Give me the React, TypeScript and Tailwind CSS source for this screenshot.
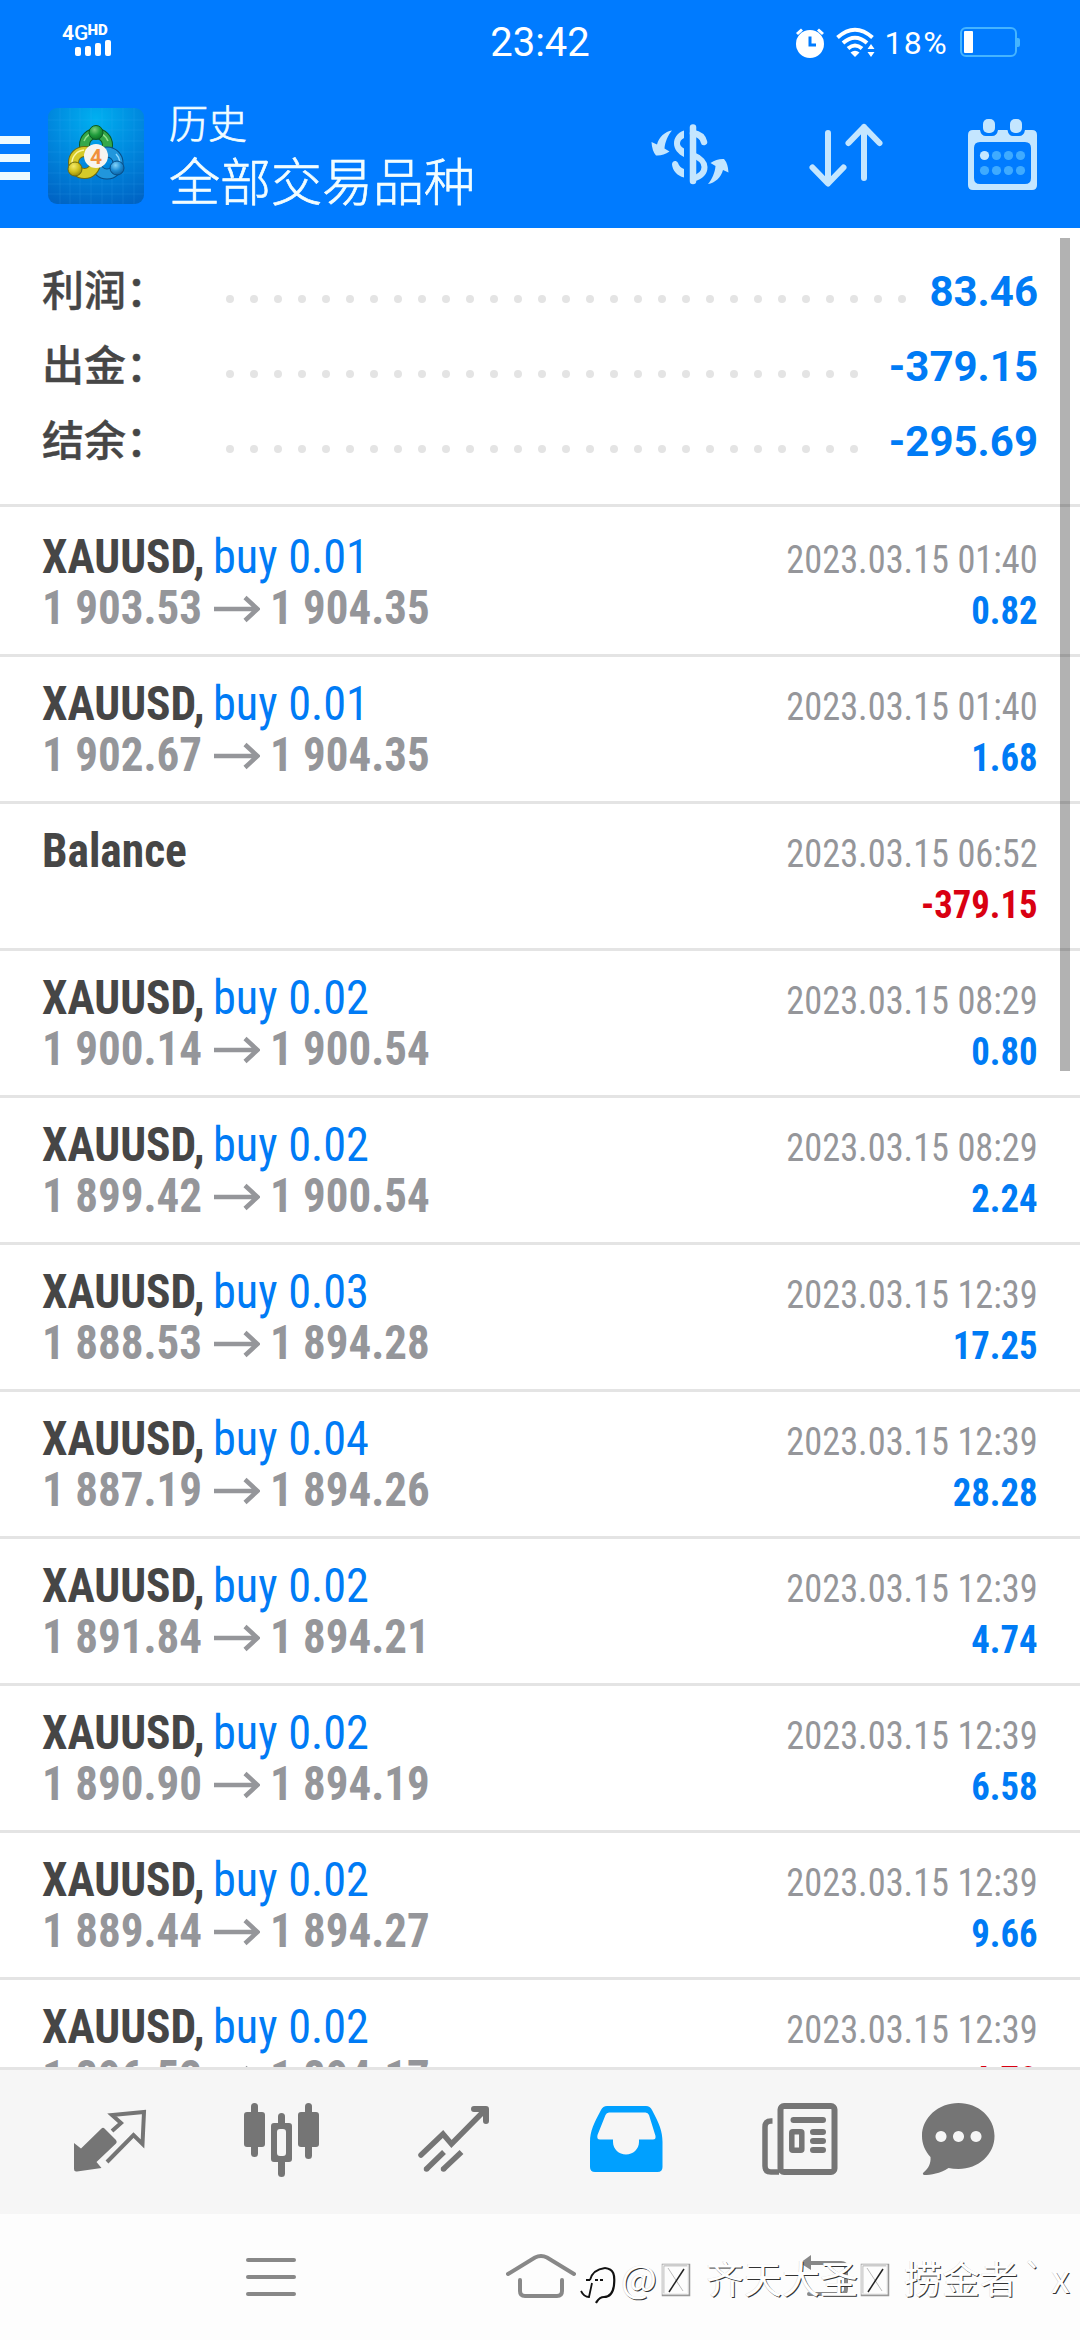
import React from 'react';

const summary = [
  { label: '利润：', value: '83.46', dots: 29 },
  { label: '出金：', value: '-379.15', dots: 27 },
  { label: '结余：', value: '-295.69', dots: 27 },
];

interface Deal {
  symbol: string;
  volume?: string;
  open?: string;
  close?: string;
  time: string;
  profit: string;
  loss?: boolean;
}

const deals: Deal[] = [
  { symbol: 'XAUUSD,', volume: 'buy 0.01', open: '1 903.53', close: '1 904.35', time: '2023.03.15 01:40', profit: '0.82' },
  { symbol: 'XAUUSD,', volume: 'buy 0.01', open: '1 902.67', close: '1 904.35', time: '2023.03.15 01:40', profit: '1.68' },
  { symbol: 'Balance', time: '2023.03.15 06:52', profit: '-379.15', loss: true },
  { symbol: 'XAUUSD,', volume: 'buy 0.02', open: '1 900.14', close: '1 900.54', time: '2023.03.15 08:29', profit: '0.80' },
  { symbol: 'XAUUSD,', volume: 'buy 0.02', open: '1 899.42', close: '1 900.54', time: '2023.03.15 08:29', profit: '2.24' },
  { symbol: 'XAUUSD,', volume: 'buy 0.03', open: '1 888.53', close: '1 894.28', time: '2023.03.15 12:39', profit: '17.25' },
  { symbol: 'XAUUSD,', volume: 'buy 0.04', open: '1 887.19', close: '1 894.26', time: '2023.03.15 12:39', profit: '28.28' },
  { symbol: 'XAUUSD,', volume: 'buy 0.02', open: '1 891.84', close: '1 894.21', time: '2023.03.15 12:39', profit: '4.74' },
  { symbol: 'XAUUSD,', volume: 'buy 0.02', open: '1 890.90', close: '1 894.19', time: '2023.03.15 12:39', profit: '6.58' },
  { symbol: 'XAUUSD,', volume: 'buy 0.02', open: '1 889.44', close: '1 894.27', time: '2023.03.15 12:39', profit: '9.66' },
  { symbol: 'XAUUSD,', volume: 'buy 0.02', open: '1 896.52', close: '1 894.17', time: '2023.03.15 12:39', profit: '-4.70', loss: true },
];

const StatusBar: React.FC = () => (
  <div className="grid h-[86px] grid-cols-3 text-white">
    <div className="pt-[24px] pl-[62px]">
      <div className="flex h-[16px] items-start font-['Roboto'] leading-none font-bold">
        <span className="text-[21px] leading-[19px]">4</span>
        <span className="text-[21px] leading-[19px] font-medium tracking-[-1px]">G</span>
        <span className="text-[15px] leading-[13px] font-black">HD</span>
      </div>
      <div className="flex h-[16px] items-end gap-[4px] pl-[13px]">
        <span className="h-[9px] w-[6px] rounded-[2px] bg-white"></span>
        <span className="h-[10px] w-[6px] rounded-[2px] bg-white"></span>
        <span className="h-[13px] w-[6px] rounded-[2px] bg-white"></span>
        <span className="h-[16px] w-[6px] rounded-[2px] bg-white"></span>
      </div>
    </div>
    <div className="pt-[20px] text-center font-['Roboto'] text-[40px] leading-[46px]">23:42</div>
    <div className="flex items-start justify-end pr-[60px]">
      <svg className="mt-[27px] h-[31px] w-[30px]" viewBox="0 0 30 31" fill="none">
        <circle cx="15" cy="17" r="14" fill="#fff" />
        <path d="M2 7 L7 2.500 M28 7 L23 2.500" stroke="#fff" strokeWidth="3" />
        <path d="M15 9.500 V18 H21" stroke="#007bff" strokeWidth="3" />
      </svg>
      <svg className="mt-[27px] ml-[11px] h-[31px] w-[40px]" viewBox="0 0 40 31" fill="none" stroke="#fff">
        <path d="M1.500 10.500 Q19 -5 36.500 10.500" strokeWidth="4" />
        <path d="M7 16 Q19 5.500 31 16" strokeWidth="4" />
        <path d="M12 21.500 Q19 15.500 26 21.500" strokeWidth="4" />
        <path d="M19 30 L14.500 25.500 Q19 22 23.500 25.500Z" fill="#fff" stroke="none" />
        <path d="M35 17 L38.500 22 H31.500Z M35 30 L38.500 25 H31.500Z" fill="#fff" stroke="none" />
      </svg>
      <span className="mt-[25px] ml-[8px] font-['Roboto'] text-[32px] leading-[37px] tracking-[1.4px]">18%</span>
      <div className="mt-[27px] ml-[12px] flex items-center">
        <div className="h-[30px] w-[57px] rounded-[6px] border-2 border-[#45b4ff] p-[2px]">
          <div className="h-full w-[9px] rounded-[1px] bg-white"></div>
        </div>
        <div className="h-[9px] w-[3px] rounded-r-[2px] bg-[#45b4ff]"></div>
      </div>
    </div>
  </div>
);

const AppLogo: React.FC = () => (
  <svg className="mt-[22px] ml-[18px] h-24 w-24" viewBox="0 0 96 96" fill="none">
    <defs>
      <radialGradient id="sky" cx="0.5" cy="0.12" r="0.95">
        <stop offset="0" stopColor="#00b0f0" />
        <stop offset="0.5" stopColor="#0088de" />
        <stop offset="1" stopColor="#0064c4" />
      </radialGradient>
      <radialGradient id="green" cx="0.4" cy="0.3" r="0.8">
        <stop offset="0" stopColor="#7ed07c" />
        <stop offset="0.5" stopColor="#1f9c3c" />
        <stop offset="1" stopColor="#0a6420" />
      </radialGradient>
      <radialGradient id="yellow" cx="0.4" cy="0.3" r="0.8">
        <stop offset="0" stopColor="#f4ea6a" />
        <stop offset="0.5" stopColor="#cfc01c" />
        <stop offset="1" stopColor="#857a08" />
      </radialGradient>
      <radialGradient id="blue" cx="0.4" cy="0.3" r="0.8">
        <stop offset="0" stopColor="#86d4fa" />
        <stop offset="0.5" stopColor="#1c8cd4" />
        <stop offset="1" stopColor="#0a5494" />
      </radialGradient>
    </defs>
    <rect width="96" height="96" rx="9" fill="url(#sky)" />
    <path
      d="M12 0V96M22 0V96M32 0V96M43 0V96M54 0V96M64 0V96M75 0V96M86 0V96M0 12H96M0 22H96M0 33H96M0 44H96M0 54H96M0 65H96M0 76H96M0 86H96"
      stroke="#4cc0ff"
      strokeOpacity="0.14"
    />
    <circle cx="48" cy="37" r="11.500" stroke="#0b5a22" strokeWidth="11" />
    <circle cx="48" cy="37" r="11.500" stroke="#35a84a" strokeWidth="9" />
    <path d="M36 33 A13 13 0 0 1 60 33" stroke="#8fe08c" strokeWidth="1.500" />
    <circle cx="59" cy="55" r="11" stroke="#084d86" strokeWidth="11" />
    <circle cx="59" cy="55" r="11" stroke="#2196dc" strokeWidth="9" />
    <path d="M68 46 A13 13 0 0 1 70 62" stroke="#8ad6ff" strokeWidth="1.500" />
    <circle cx="36.500" cy="54.500" r="11" stroke="#6f6a0c" strokeWidth="11" />
    <circle cx="36.500" cy="54.500" r="11" stroke="#d6ca28" strokeWidth="9" />
    <path d="M24 55 A13 13 0 0 1 36 42" stroke="#fbf6a0" strokeWidth="1.500" />
    <circle cx="48" cy="24.500" r="7" fill="url(#green)" stroke="#0b5a22" />
    <circle cx="27" cy="61" r="7" fill="url(#yellow)" stroke="#6f6a0c" />
    <circle cx="69" cy="60" r="7" fill="url(#blue)" stroke="#084d86" />
    <circle cx="48" cy="48" r="12" fill="#f6f4f0" />
    <text x="48" y="55.500" textAnchor="middle" fill="#f0913c" className="font-['Roboto'] text-[21px] font-bold">4</text>
  </svg>
);

const Header: React.FC = () => (
  <header className="h-[228px] bg-[#007bff]">
    <StatusBar />
    <div className="flex h-[142px] items-start">
      <div className="mt-[50px] flex w-[30px] flex-col gap-[10px]">
        <span className="h-[8px] bg-[#ecfaff]"></span>
        <span className="h-[8px] bg-[#ecfaff]"></span>
        <span className="h-[8px] bg-[#ecfaff]"></span>
      </div>
      <AppLogo />
      <div className="ml-[25px] flex-1 pt-[7px] font-['Noto_Sans_CJK_SC',sans-serif] font-light text-[#f2fdff]">
        <div className="text-[39px] leading-[56px] [-webkit-text-stroke:0.7px_#f2fdff]">历史</div>
        <div className="text-[51px] leading-[61px] [-webkit-text-stroke:0.7px_#f2fdff]">全部交易品种</div>
      </div>
      <svg className="mt-[36px] h-[64px] w-[80px]" viewBox="0 0 80 64" fill="none" stroke="#c4e6ff">
        <path d="M43 5.500 V59" strokeWidth="6.500" strokeLinecap="round" />
        <path d="M34 8.500 C27 11 24 16 24 21.500 C24 27 28 32 34 35 V26.500 C31 25 30 23 30 21.500 C30 19.500 31 17.500 34 16Z" fill="#c4e6ff" stroke="none" />
        <path d="M43 11 C49 12 53 15.500 54 20" strokeWidth="6.500" strokeLinecap="round" />
        <path d="M43 33 C51 36 54.500 41 54.500 45 C54.500 50 51 54.500 43 56.500" strokeWidth="6" />
        <path d="M22 42.500 C22 39 26 37.500 28 41 C29 44 31 46 34 47 V55.500 C27 54 22.500 48 22 42.500Z" fill="#c4e6ff" stroke="none" />
        <path d="M22 8.500 C15 9.500 9 15 7 22.500 L1.500 20 Q2 29 6 33.500 Q13 34 19.500 29.500 L14.500 26.500 C15 20 18 13 22 8.500Z" fill="#c4e6ff" stroke="none" />
        <path d="M58 62 C65 61 71 55.500 73 48 L78.500 50.500 Q78 41.500 74 37 Q67 36.500 60.500 41 L65.500 44 C65 50.500 62 57.500 58 62Z" fill="#c4e6ff" stroke="none" />
      </svg>
      <svg className="mt-[36px] ml-[78px] h-[68px] w-[76px]" viewBox="0 0 76 68" fill="none" stroke="#c4e6ff" strokeWidth="6" strokeLinecap="round" strokeLinejoin="round">
        <path d="M20 11 V61 M4.500 45.500 L20 61.500 L35.500 45.500" />
        <path d="M56 56 V5 M40.500 21 L56 5 L71.500 21" />
      </svg>
      <svg className="mt-[32px] mr-[43px] ml-[84px] h-[73px] w-[69px]" viewBox="0 0 69 73">
        <path
          fill="#c4e6ff"
          fillRule="evenodd"
          d="M5 12 H12 Q13 18 18 18 H24 Q29 18 30 12 H39.500 Q40.500 18 45 18 H51 Q56 18 57 12 H64 Q69 12 69 17 V67 Q69 72 64 72 H5 Q0 72 0 67 V17 Q0 12 5 12Z M12 24 Q6 24 6 30 V60 Q6 66 12 66 H57 Q63 66 63 60 V30 Q63 24 57 24Z"
        />
        <rect x="15" y="1" width="12" height="14" rx="5" fill="#c4e6ff" />
        <rect x="42" y="1" width="12" height="14" rx="5" fill="#c4e6ff" />
        <circle cx="16.500" cy="37.500" r="4.600" fill="#c4e6ff" />
        <circle cx="28.500" cy="37.500" r="4.600" fill="#3fabff" />
        <circle cx="40.500" cy="37.500" r="4.600" fill="#3fabff" />
        <circle cx="52.500" cy="37.500" r="4.600" fill="#3fabff" />
        <circle cx="16.500" cy="52.500" r="4.600" fill="#3fabff" />
        <circle cx="28.500" cy="52.500" r="4.600" fill="#3fabff" />
        <circle cx="40.500" cy="52.500" r="4.600" fill="#3fabff" />
        <circle cx="52.500" cy="52.500" r="4.600" fill="#3fabff" />
      </svg>
    </div>
  </header>
);

const Summary: React.FC = () => (
  <section className="mb-[3px] flex h-[279px] flex-col border-b-[3px] border-[#e4e4e4] pt-[24px] pr-[42px] pl-[42px]">
    {summary.map((item) => (
      <div key={item.label} className="flex h-[75px] items-start">
        <span className="-mt-[2px] w-[184px] font-['Noto_Sans_CJK_SC',sans-serif] text-[42px] leading-[75px] font-medium text-[#464646] [-webkit-text-stroke:0.4px_#464646]">
          {item.label}
        </span>
        <div className="mt-[43px] flex gap-[16px]">
          {Array.from({ length: item.dots }, (_, i) => (
            <span key={i} className="size-2 rounded-full bg-[#e4e4e4]"></span>
          ))}
        </div>
        <span className="mt-[2px] ml-auto font-['Roboto'] text-[42px] leading-[75px] font-bold text-[#007bf5]">{item.value}</span>
      </div>
    ))}
  </section>
);

const DealRow: React.FC<{ deal: Deal }> = ({ deal }) => (
  <li className="flex h-[147px] justify-between border-b-[3px] border-[#e4e4e4] pr-[42px] pl-[42px] font-['Roboto_Condensed']">
    <div className="pt-[21px] text-[48px] leading-[51px] whitespace-nowrap">
      <div className="flex">
        <span className="w-[171px] origin-left scale-x-[0.947] font-bold text-[#464646]">{deal.symbol}</span>
        {deal.volume && <span className="origin-left scale-x-[0.965] text-[#007bf5]">{deal.volume}</span>}
      </div>
      {deal.open && (
        <div className="flex items-center font-bold text-[#95969a]">
          <span className="w-[172px] origin-left scale-x-[0.938]">{deal.open}</span>
          <svg className="mt-[2px] h-[28px] w-[46px]" viewBox="0 0 46 28" fill="none" stroke="#95969a" strokeWidth="4.500">
            <path d="M0 14 H43 M31 2.500 L43.500 14 L31 25.500" />
          </svg>
          <span className="ml-[10px] origin-left scale-x-[0.936]">{deal.close}</span>
        </div>
      )}
    </div>
    <div className="pt-[25px] text-right text-[39px] leading-[51px] whitespace-nowrap">
      <div className="origin-right scale-x-[0.932] text-[#95969a]">{deal.time}</div>
      <div className={deal.loss ? 'origin-right scale-x-[0.942] font-bold text-[#d90012]' : 'origin-right scale-x-[0.942] font-bold text-[#007bf5]'}>
        {deal.profit}
      </div>
    </div>
  </li>
);

const TabBar: React.FC = () => (
  <nav className="flex h-[147px] items-start border-t-[3px] border-[#e4e4e4] bg-[#f6f6f6] text-[#757575]">
    <svg className="mt-[38px] ml-[74px] h-[65px] w-[73px]" viewBox="0 0 73 65" fill="none">
      <path d="M38 23 L47 15 L38 7 L70 4 L68.500 36 L59.500 27 L33 54" stroke="currentColor" strokeWidth="4" />
      <path d="M0 35 L7 40.500 L27.500 20.500 Q29 19 30.500 20.500 L42 32 Q43.500 34 42 35.500 L22.500 54 L27.500 60 L3 63.500 Q0 64 0 61Z" fill="currentColor" />
    </svg>
    <svg className="mt-[33px] ml-[97px] h-[74px] w-[75px]" viewBox="0 0 75 74" fill="currentColor">
      <rect x="7" width="7" height="54" rx="3.500" />
      <rect y="9" width="21" height="35" rx="3" />
      <rect x="34" y="10" width="7" height="15" rx="3.500" />
      <rect x="34" y="55" width="7" height="19" rx="3.500" />
      <path fillRule="evenodd" d="M30 20 H45 Q48 20 48 23 V56 Q48 59 45 59 H30 Q27 59 27 56 V23 Q27 20 30 20Z M36 26 Q33 26 33 29 V50 Q33 53 36 53 H39 Q42 53 42 50 V29 Q42 26 39 26Z" />
      <rect x="61" width="7" height="56" rx="3.500" />
      <rect x="54" y="9" width="21" height="35" rx="3" />
    </svg>
    <svg className="mt-[35px] ml-[99px] h-[68px] w-[72px]" viewBox="0 0 72 68" fill="none" stroke="currentColor" strokeWidth="5.500">
      <path d="M3 50 L25 29 L33.500 39 L67 5" strokeLinecap="round" />
      <path d="M56 4 H68 V16" strokeWidth="6" strokeLinecap="round" strokeLinejoin="round" />
      <path d="M9 63.500 L26 47 M26 63.500 L43.500 47" />
      <path d="M8.500 64 H8.600 M25.500 64 H25.600" strokeLinecap="round" />
    </svg>
    <svg className="mt-[36px] ml-[100px] h-[66px] w-[73px]" viewBox="0 0 73 66" fill="#00a0ff">
      <path
        fillRule="evenodd"
        d="M17 0 H56 Q60 0 62 4 C69 17 72.500 25 72.500 36 V61 Q72.500 66 67.500 66 H5 Q0 66 0 61 V36 C0 25 4 17 11 4 Q13 0 17 0Z M19 6.500 Q16.500 6.500 15.500 9 L7.500 29 Q6.500 33.500 10 33.500 H23 V36 C23 43 29 48.500 36 48.500 C43 48.500 49 43 49 36 V33.500 H63 Q66 33.500 65.500 30 L59 9 Q58 6.500 55.500 6.500Z"
      />
    </svg>
    <svg className="mt-[33px] ml-[99px] h-[72px] w-[76px]" viewBox="0 0 76 72" fill="none" stroke="currentColor">
      <rect x="18.500" y="3" width="54" height="66" rx="3.500" strokeWidth="6" />
      <path d="M10.500 18 H9 Q3 18 3 24 V63 Q3 69 9 69 H17" strokeWidth="5.500" />
      <path d="M31.500 17 H61 M51 29 H61 M51 38 H61 M51 47 H61" strokeWidth="6" strokeLinecap="round" />
      <rect x="29.800" y="28.800" width="10" height="18.500" rx="1" strokeWidth="5.500" />
    </svg>
    <svg className="mt-[33px] ml-[84px] h-[72px] w-[73px]" viewBox="0 0 73 72" fill="currentColor">
      <path
        fillRule="evenodd"
        d="M36.500 0 C56.500 0 72.500 14.500 72.500 33 C72.500 51.500 56.500 66 36.500 66 Q31 66 26.500 65 C18 70.500 9 72 2 72 Q0 71 1.500 69.500 C7 65 9 60 8.500 54 C3 48 0 41 0 33 C0 14.500 16.500 0 36.500 0Z M19 28 a5.500 5.500 0 1 0 0.010 0Z M36.500 28 a5.500 5.500 0 1 0 0.010 0Z M54 28 a5.500 5.500 0 1 0 0.010 0Z"
      />
    </svg>
  </nav>
);

const MissingGlyph: React.FC = () => (
  <svg className="h-[34px] w-[30px]" viewBox="0 0 30 34" fill="none">
    <path d="M2 2 H28 V32 H2Z" stroke="#999" strokeWidth="2.500" />
    <path d="M2 2 H27 V31 H2Z" stroke="#fff" strokeWidth="1.200" />
    <path d="M7 5 L22 28" stroke="#bbb" />
    <path d="M8 29 L23 6" stroke="#222" strokeWidth="1.500" />
  </svg>
);

const Watermark: React.FC = () => (
  <div className="absolute top-[2247px] left-[578px] flex h-[60px] items-center font-['Noto_Sans_CJK_SC',sans-serif] text-[38px] leading-[60px] whitespace-pre text-white [text-shadow:1px_1px_0_#333,-0.5px_-0.5px_0_#ddd]">
    <svg className="mt-[16px] h-[40px] w-[38px]" viewBox="0 0 38 40" fill="none" stroke="#111">
      <path d="M27 3 C36 4 37 10 36 20 C35 29 31 32 26 32 C21 32 20 35 18 38" strokeWidth="2.200" />
      <path d="M12 15 C14 7 19 4 27 3 M8 15 H12 M17 15 H20 M22 15 H25 M14 18 L11 32 Q6 32 3 26" strokeWidth="1.800" />
    </svg>
    <span className="ml-[5px] w-[40px]">@</span>
    <span className="flex pt-[6px]">
      <MissingGlyph />
    </span>
    <span className="ml-[15px]">齐天大圣</span>
    <span className="ml-[2px] flex pt-[6px]">
      <MissingGlyph />
    </span>
    <span className="ml-[14px] w-[114px]">捞金者</span>
    <span className="ml-[4px] w-[29px]">`</span>
    <span>x</span>
  </div>
);

const SystemNav: React.FC = () => (
  <div className="flex h-[126px] items-start bg-[#fdfdfd] text-[#888]">
    <div className="mt-[44px] ml-[246px] flex w-[50px] flex-col gap-[13px]">
      <span className="h-[4px] rounded-full bg-current"></span>
      <span className="h-[4px] rounded-full bg-current"></span>
      <span className="h-[4px] rounded-full bg-current"></span>
    </div>
    <svg className="mt-[39px] ml-[210px] h-[46px] w-[70px]" viewBox="0 0 70 46" fill="none" stroke="currentColor" strokeWidth="4" strokeLinecap="round">
      <path d="M2 21 L29 4.500 Q35 1.500 41 4.500 L68 21" />
      <path d="M14 27 V38 Q14 43 19 43 H51 Q56 43 56 38 V27" />
    </svg>
    <svg className="mt-[40px] ml-[223px] h-[46px] w-[52px]" viewBox="0 0 52 46" fill="none" stroke="currentColor" strokeWidth="4">
      <path d="M10 9 H42 Q47 9 47 14 V35 Q47 40 42 40 H10" strokeLinecap="round" />
      <path d="M12 1 L1 9 L12 16Z" fill="currentColor" stroke="none" />
    </svg>
  </div>
);

export default function App() {
  return (
    <div className="flex h-[2340px] w-[1080px] flex-col overflow-hidden bg-white">
      <Header />
      <main className="relative h-[1839px] overflow-hidden">
        <Summary />
        <ul>
          {deals.map((deal, i) => (
            <DealRow key={i} deal={deal} />
          ))}
        </ul>
        <div className="absolute top-[10px] right-[10px] h-[833px] w-[10px] bg-black/30"></div>
      </main>
      <TabBar />
      <SystemNav />
      <Watermark />
    </div>
  );
}
